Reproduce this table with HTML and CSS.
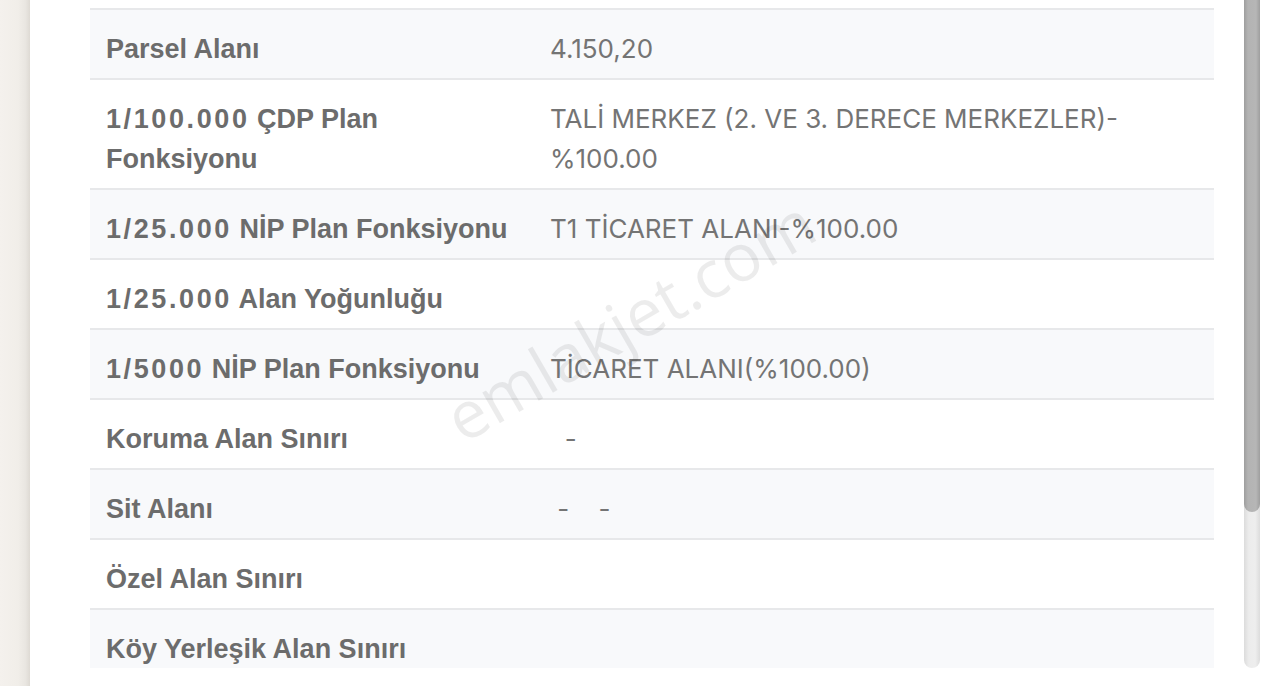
FILE: index.html
```html
<!DOCTYPE html>
<html lang="tr">
<head>
<meta charset="utf-8">
<title>İmar Bilgileri</title>
<link rel="stylesheet" href="styles.css">
</head>
<body>
<div class="page">
  <div class="side"></div>
  <div class="main">
    <div class="scroller">
      <div class="table">
        <div class="row row-prev"></div>
        <div class="row striped"><div class="label">Parsel Alanı</div><div class="value">4.150,20</div></div>
        <div class="row"><div class="label"><span class="num">1/100.000</span> ÇDP Plan Fonksiyonu</div><div class="value">TALİ MERKEZ (2. VE 3. DERECE MERKEZLER)-%100.00</div></div>
        <div class="row striped"><div class="label"><span class="num">1/25.000</span> NİP Plan Fonksiyonu</div><div class="value">T1 TİCARET ALANI-%100.00</div></div>
        <div class="row"><div class="label"><span class="num">1/25.000</span> Alan Yoğunluğu</div><div class="value"></div></div>
        <div class="row striped"><div class="label"><span class="num">1/5000</span> NİP Plan Fonksiyonu</div><div class="value">TİCARET ALANI(%100.00)</div></div>
        <div class="row"><div class="label">Koruma Alan Sınırı</div><div class="value">&nbsp;&nbsp;-</div></div>
        <div class="row striped"><div class="label">Sit Alanı</div><div class="value">&nbsp;-&nbsp;&nbsp;&nbsp;&nbsp;-</div></div>
        <div class="row"><div class="label">Özel Alan Sınırı</div><div class="value"></div></div>
        <div class="row striped"><div class="label">Köy Yerleşik Alan Sınırı</div><div class="value"></div></div>
      </div>
      <div class="watermark">emlakjet.com</div>
    </div>
    <div class="scrollbar"><div class="thumb"></div></div>
  </div>
</div>
</body>
</html>
```
FILE: styles.css
```css
* { box-sizing: border-box; }
html, body { margin: 0; padding: 0; background: #fff; }
body { width: 1274px; height: 686px; overflow: hidden; }
.page { display: flex; height: 686px; }
.side {
  width: 30px;
  flex: none;
  background: linear-gradient(to right, #f4f1ed 0%, #f1eee9 60%, #e9e6e1 85%, #dedad4 100%);
}
.main { flex: 1; display: flex; background: #fff; }
.scroller {
  position: relative;
  width: 1184px;
  padding-left: 60px;
  height: 668px;
  overflow: hidden;
}
.table { width: 1124px; }
.row {
  display: flex;
  border-bottom: 2px solid #e7e8ea;
  line-height: 40px;
}
.row-prev { height: 10px; }
.row.striped { background: #f8f9fb; }
.label {
  width: 444px;
  flex: none;
  padding: 19px 16px 9px;
  font-family: "Liberation Sans", Arial, sans-serif;
  font-size: 27px;
  font-weight: 700;
  color: #6c6c6c;
}
.num { letter-spacing: 2.6px; }
.value {
  flex: 1;
  padding: 19px 16px 9px;
  font-family: Inter, "Noto Sans", sans-serif;
  font-size: 26px;
  font-weight: 400;
  color: #747474;
}
.watermark {
  position: absolute;
  left: 420px;
  top: 377px;
  font-family: "Open Sans", sans-serif;
  font-size: 66px;
  line-height: 90px;
  font-weight: 400;
  color: rgba(0, 0, 0, 0.075);
  transform: rotate(-30deg);
  transform-origin: left center;
  white-space: nowrap;
  pointer-events: none;
}
.scrollbar {
  width: 16px;
  margin-left: 30px;
  height: 668px;
  border-radius: 0 0 8px 8px;
  background: linear-gradient(to right, #dcdcdc, #ececec 30%, #eeeeee 70%, #dcdcdc);
}
.thumb {
  height: 512px;
  border-radius: 0 0 8px 8px;
  background: linear-gradient(to right, #9e9e9e, #b3b3b3 25%, #b6b6b6 75%, #9e9e9e);
}
```
